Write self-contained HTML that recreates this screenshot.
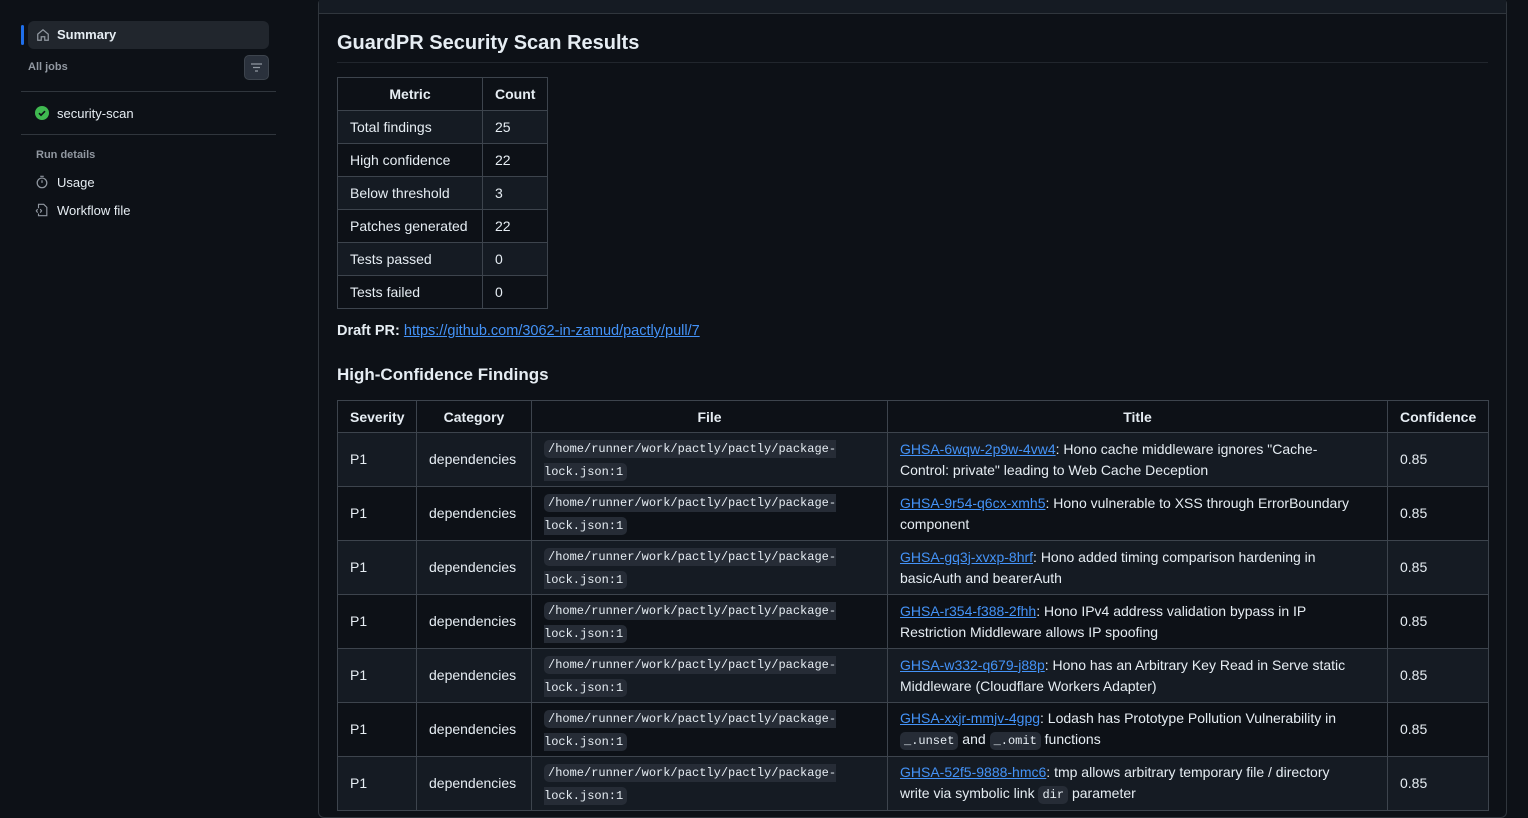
<!DOCTYPE html>
<html><head><meta charset="utf-8"><style>
*{box-sizing:border-box;margin:0;padding:0}
body{width:1528px;height:805px;overflow:hidden;background:#0d1117;color:#e6edf3;font-family:"Liberation Sans",sans-serif;font-size:14.5px;position:relative}
.side{position:absolute;left:0;top:0;width:300px;height:805px}
.sum{position:absolute;left:28px;top:21px;width:241px;height:28px;background:#21262d;border-radius:6px;font-weight:bold;font-size:13px;line-height:28px;padding-left:29px}
.bar{position:absolute;left:21px;top:25px;width:3px;height:20px;background:#1f6feb;border-radius:2px}
.lbl{position:absolute;font-size:11px;color:#9198a1;font-weight:bold}
.item{position:absolute;font-size:13px;color:#e6edf3}
.hr{position:absolute;height:1px;background:#30363d}
.filt{position:absolute;left:244px;top:55px;width:25px;height:25px;background:#2a313c;border:1px solid #3d444d;border-radius:5px}
.main{position:absolute;left:318px;top:-2px;width:1189px;height:820px;border:1px solid #30363d;border-radius:6px}
.topbar{position:absolute;left:319px;top:0;width:1187px;height:14px;background:#151b23;border-bottom:1px solid #30363d}
h2{position:absolute;left:337px;top:32px;font-size:20px;font-weight:bold;width:1151px;padding-bottom:7px;border-bottom:1px solid #21262d}
table{position:absolute;border-collapse:collapse;table-layout:fixed}
td,th{border:1px solid #3d444d;padding:0 12px;font-size:14px;vertical-align:middle;text-align:left;white-space:nowrap}
th{text-align:center;font-weight:bold}
tr:nth-child(even) td{background:#151b23}
code{font-family:"Liberation Mono",monospace;font-size:12px;background:#262c36;border-radius:5px;padding:2px 4px}
a{color:#4493f8;text-decoration:underline}
.ff td{line-height:21px}
</style></head><body>
<div class="side">
<div class="bar"></div>
<div class="sum">Summary</div>
<svg style="position:absolute;left:36px;top:28px" width="14" height="14" viewBox="0 0 16 16" fill="none" stroke="#9198a1" stroke-width="1.4"><path d="M2 7 8 2l6 5v7H10V10H6v4H2z"/></svg>
<div class="lbl" style="left:28px;top:61px">All jobs</div>
<div class="filt"><svg width="23" height="23" viewBox="0 0 23 23" stroke="#9198a1" stroke-width="1.3"><path d="M6 8h11M8 11.5h7M10 15h3"/></svg></div>
<div class="hr" style="left:21px;top:91px;width:255px"></div>
<svg style="position:absolute;left:35px;top:106px" width="14" height="14" viewBox="0 0 14 14"><circle cx="7" cy="7" r="7" fill="#3fb950"/><path d="M4 7.2l2 2 4-4" stroke="#0d1117" stroke-width="1.6" fill="none"/></svg>
<div class="item" style="left:57px;top:106px">security-scan</div>
<div class="hr" style="left:21px;top:134px;width:255px"></div>
<div class="lbl" style="left:36px;top:149px">Run details</div>
<svg style="position:absolute;left:35px;top:175px" width="14" height="14" viewBox="0 0 16 16" fill="none" stroke="#9198a1" stroke-width="1.4"><circle cx="8" cy="9" r="5.5"/><path d="M6 1.5h4M8 9V6"/></svg>
<div class="item" style="left:57px;top:175px">Usage</div>
<svg style="position:absolute;left:35px;top:203px" width="14" height="14" viewBox="0 0 16 16" fill="none" stroke="#9198a1" stroke-width="1.3"><path d="M4 6V1.5h6l3.5 3.5v9.5H4V12"/><path d="M3 7 1.5 9 3 11M6 7l1.5 2L6 11"/></svg>
<div class="item" style="left:57px;top:203px">Workflow file</div>
</div>
<div class="main"></div>
<div class="topbar"></div>
<h2>GuardPR Security Scan Results</h2>
<table style="left:337px;top:77px;width:210px">
<colgroup><col style="width:145px"><col style="width:65px"></colgroup>
<tr style="height:33px"><th>Metric</th><th style="text-align:left">Count</th></tr>
<tr style="height:33px"><td>Total findings</td><td>25</td></tr>
<tr style="height:33px"><td>High confidence</td><td>22</td></tr>
<tr style="height:33px"><td>Below threshold</td><td>3</td></tr>
<tr style="height:33px"><td>Patches generated</td><td>22</td></tr>
<tr style="height:33px"><td>Tests passed</td><td>0</td></tr>
<tr style="height:33px"><td>Tests failed</td><td>0</td></tr>
</table>
<div style="position:absolute;left:337px;top:323px"><b>Draft PR:</b> <a>https://github.com/3062-in-zamud/pactly/pull/7</a></div>
<div style="position:absolute;left:337px;top:365px;font-size:17px;font-weight:bold">High-Confidence Findings</div>
<table class="ff" style="left:337px;top:400px;width:1151px">
<colgroup><col style="width:79px"><col style="width:115px"><col style="width:356px"><col style="width:500px"><col style="width:101px"></colgroup>
<tr style="height:32px"><th style="text-align:left">Severity</th><th>Category</th><th>File</th><th>Title</th><th style="text-align:left">Confidence</th></tr>
<tr style="height:54px"><td>P1</td><td>dependencies</td><td><code>/home/runner/work/pactly/pactly/package-<br>lock.json:1</code></td><td><a>GHSA-6wqw-2p9w-4vw4</a>: Hono cache middleware ignores "Cache-<br>Control: private" leading to Web Cache Deception</td><td>0.85</td></tr>
<tr style="height:54px"><td>P1</td><td>dependencies</td><td><code>/home/runner/work/pactly/pactly/package-<br>lock.json:1</code></td><td><a>GHSA-9r54-q6cx-xmh5</a>: Hono vulnerable to XSS through ErrorBoundary<br>component</td><td>0.85</td></tr>
<tr style="height:54px"><td>P1</td><td>dependencies</td><td><code>/home/runner/work/pactly/pactly/package-<br>lock.json:1</code></td><td><a>GHSA-gq3j-xvxp-8hrf</a>: Hono added timing comparison hardening in<br>basicAuth and bearerAuth</td><td>0.85</td></tr>
<tr style="height:54px"><td>P1</td><td>dependencies</td><td><code>/home/runner/work/pactly/pactly/package-<br>lock.json:1</code></td><td><a>GHSA-r354-f388-2fhh</a>: Hono IPv4 address validation bypass in IP<br>Restriction Middleware allows IP spoofing</td><td>0.85</td></tr>
<tr style="height:54px"><td>P1</td><td>dependencies</td><td><code>/home/runner/work/pactly/pactly/package-<br>lock.json:1</code></td><td><a>GHSA-w332-q679-j88p</a>: Hono has an Arbitrary Key Read in Serve static<br>Middleware (Cloudflare Workers Adapter)</td><td>0.85</td></tr>
<tr style="height:54px"><td>P1</td><td>dependencies</td><td><code>/home/runner/work/pactly/pactly/package-<br>lock.json:1</code></td><td><a>GHSA-xxjr-mmjv-4gpg</a>: Lodash has Prototype Pollution Vulnerability in<br><code>_.unset</code> and <code>_.omit</code> functions</td><td>0.85</td></tr>
<tr style="height:54px"><td>P1</td><td>dependencies</td><td><code>/home/runner/work/pactly/pactly/package-<br>lock.json:1</code></td><td><a>GHSA-52f5-9888-hmc6</a>: tmp allows arbitrary temporary file / directory<br>write via symbolic link <code>dir</code> parameter</td><td>0.85</td></tr>
</table>
</body></html>
